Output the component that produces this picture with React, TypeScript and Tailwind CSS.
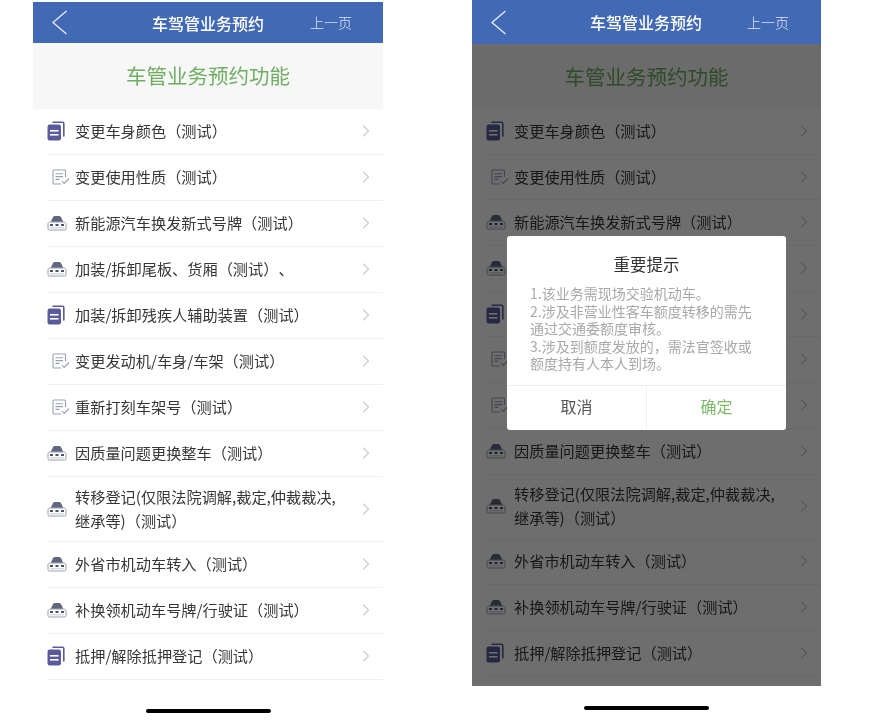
import { ChevronRight } from "lucide-react";

type IconKind = "doc" | "check" | "car";

const rows: { icon: IconKind; text: string; tall?: boolean }[] = [
  { icon: "doc", text: "变更车身颜色（测试）" },
  { icon: "check", text: "变更使用性质（测试）" },
  { icon: "car", text: "新能源汽车换发新式号牌（测试）" },
  { icon: "car", text: "加装/拆卸尾板、货厢（测试）、" },
  { icon: "doc", text: "加装/拆卸残疾人辅助装置（测试）" },
  { icon: "check", text: "变更发动机/车身/车架（测试）" },
  { icon: "check", text: "重新打刻车架号（测试）" },
  { icon: "car", text: "因质量问题更换整车（测试）" },
  { icon: "car", text: "转移登记(仅限法院调解,裁定,仲裁裁决,继承等)（测试）", tall: true },
  { icon: "car", text: "外省市机动车转入（测试）" },
  { icon: "car", text: "补换领机动车号牌/行驶证（测试）" },
  { icon: "doc", text: "抵押/解除抵押登记（测试）" },
];

function DocIcon() {
  return (
    <svg width="18" height="20" viewBox="0 0 18 20" fill="none">
      <path d="M6 1.2h9.500a1.300 1.300 0 0 1 1.300 1.300v12.500" stroke="#5a5a9c" strokeWidth="1.600" strokeLinecap="round" />
      <rect x="0.500" y="3.500" width="13.500" height="16" rx="2.200" fill="#5a5a9c" />
      <rect x="3" y="9" width="8.500" height="1.600" fill="#fff" />
      <rect x="3" y="13" width="8.500" height="1.600" fill="#fff" />
    </svg>
  );
}

function CheckIcon() {
  return (
    <svg width="18" height="16" viewBox="0 0 18 16" fill="none" stroke="#9aa2b0" strokeWidth="1.100" className="ml-[5px]">
      <path d="M13.500 8V2a1 1 0 0 0-1-1H2a1 1 0 0 0-1 1v12a1 1 0 0 0 1 1h7" />
      <path d="M3.500 4.800h7.500M3.500 7.600h7.500M3.500 10.400h4" />
      <path d="M10 12l2.200 2.400L17 9.500" />
    </svg>
  );
}

function CarIcon() {
  return (
    <svg width="20" height="16" viewBox="0 0 20 16" fill="none">
      <path d="M3.500 7.500L5.800 2.500C6.300 1.500 7.200 1 8.200 1h3.600c1 0 1.900.5 2.400 1.500l2.300 5z" fill="#5f6680" />
      <path d="M1 8.500c.5-1 1.500-1.500 3-1.500h12c1.500 0 2.500.5 3 1.500v5.300c0 .7-.5 1.200-1.200 1.200H2.200c-.7 0-1.200-.5-1.200-1.200z" stroke="#9a9fae" strokeWidth="1" fill="#fff" />
      <path d="M3 10h3M8.500 10h3M14 10h3" stroke="#4c5268" strokeWidth="1.800" />
      <path d="M3 12.800h14" stroke="#c0c3cd" strokeWidth="0.900" />
    </svg>
  );
}

function RowIcon({ kind }: { kind: IconKind }) {
  if (kind === "doc") return <DocIcon />;
  if (kind === "check") return <CheckIcon />;
  return <CarIcon />;
}

function Row({ icon, text, tall, dim }: { icon: IconKind; text: string; tall?: boolean; dim?: boolean }) {
  return (
    <div className={`flex items-center pl-[14px] pr-[7px] pb-[2px] ${tall ? "h-[65px]" : dim ? "h-[45.7px]" : "h-[46px]"}`}>
      <div className="w-[28px] flex justify-start shrink-0">
        <RowIcon kind={icon} />
      </div>
      <div className="flex-1 flex items-center justify-between">
        <span className="text-[15.200px] leading-[24px] text-[#363636] w-[272px] pb-[2px]">{text}</span>
        <ChevronRight size={20} strokeWidth={1.300} className="text-[#cdcdcd]" />
      </div>
    </div>
  );
}

function Dialog() {
  return (
    <div className="absolute left-[35px] top-[192px] w-[279px] h-[194px] bg-white rounded-[3px] flex flex-col">
      <div className="text-center text-[16.500px] leading-[24px] text-[#333] pt-[16px]">重要提示</div>
      <div className="pl-[23px] pr-[30px] pt-[9px] text-[14px] leading-[17.500px] text-[#a8a8a8] flex-1">
        <p>1.该业务需现场交验机动车。</p>
        <p>2.涉及非营业性客车额度转移的需先通过交通委额度审核。</p>
        <p>3.涉及到额度发放的，需法官签收或额度持有人本人到场。</p>
      </div>
      <div className="h-[45px] flex border-t border-[#eeeeee] text-[16px]">
        <div className="w-[140px] flex items-center justify-center text-[#555] border-r border-[#f0f0f0] pb-[4px]">取消</div>
        <div className="flex-1 flex items-center justify-center text-[#7cb96a] pb-[4px]">确定</div>
      </div>
    </div>
  );
}

function Phone({ dim }: { dim?: boolean }) {
  return (
    <div className={`flex flex-col ${dim ? "w-[349px]" : "w-[350px] pt-[2px]"}`}>
      <div className={`bg-[#4269b3] flex items-center text-white relative z-10 pl-[18px] ${dim ? "h-[44px]" : "h-[41px]"}`}>
        <svg width="17" height="25" viewBox="0 0 17 25" fill="none" stroke="#e8edf8" strokeWidth="1.300">
          <path d="M15.500 1L2 12.500 15.500 24" />
        </svg>
        <span className={`text-[16px] font-medium ${dim ? "ml-[83px]" : "ml-[84px]"}`}>车驾管业务预约</span>
        <span className={`text-[14px] font-light text-[#dfe6f5] ${dim ? "ml-[45px]" : "ml-[46px]"}`}>上一页</span>
      </div>
      <div className={`relative ${dim ? "h-[642px]" : "h-[636px]"}`}>
        <div className={`bg-[#f7f7f7] flex items-center justify-center text-[20.500px] text-[#6fae62] pb-[1px] ${dim ? "h-[65px]" : "h-[66px]"}`}>
          车管业务预约功能
        </div>
        <div>
          {rows.map((r) => (
            <div key={r.text} className="relative">
              <Row {...r} dim={dim} />
              <div className="absolute left-[14px] right-0 bottom-0 h-px bg-[#f0f0f0]" />
            </div>
          ))}
        </div>
        {dim && (
          <>
            <div className="absolute inset-0 bg-black/[.57]" />
            <Dialog />
          </>
        )}
      </div>
      <div className={`flex justify-center ${dim ? "mt-[20px]" : "mt-[30px]"}`}>
        <div className="w-[125px] h-[4px] rounded-full bg-black" />
      </div>
    </div>
  );
}

export default function App() {
  return (
    <div className="w-[870px] h-[720px] overflow-hidden bg-white flex gap-[89px] pl-[33px] [text-spacing-trim:space-all] blur-[0.3px] font-['Noto_Sans_CJK_SC',sans-serif]">
      <Phone />
      <Phone dim />
    </div>
  );
}
